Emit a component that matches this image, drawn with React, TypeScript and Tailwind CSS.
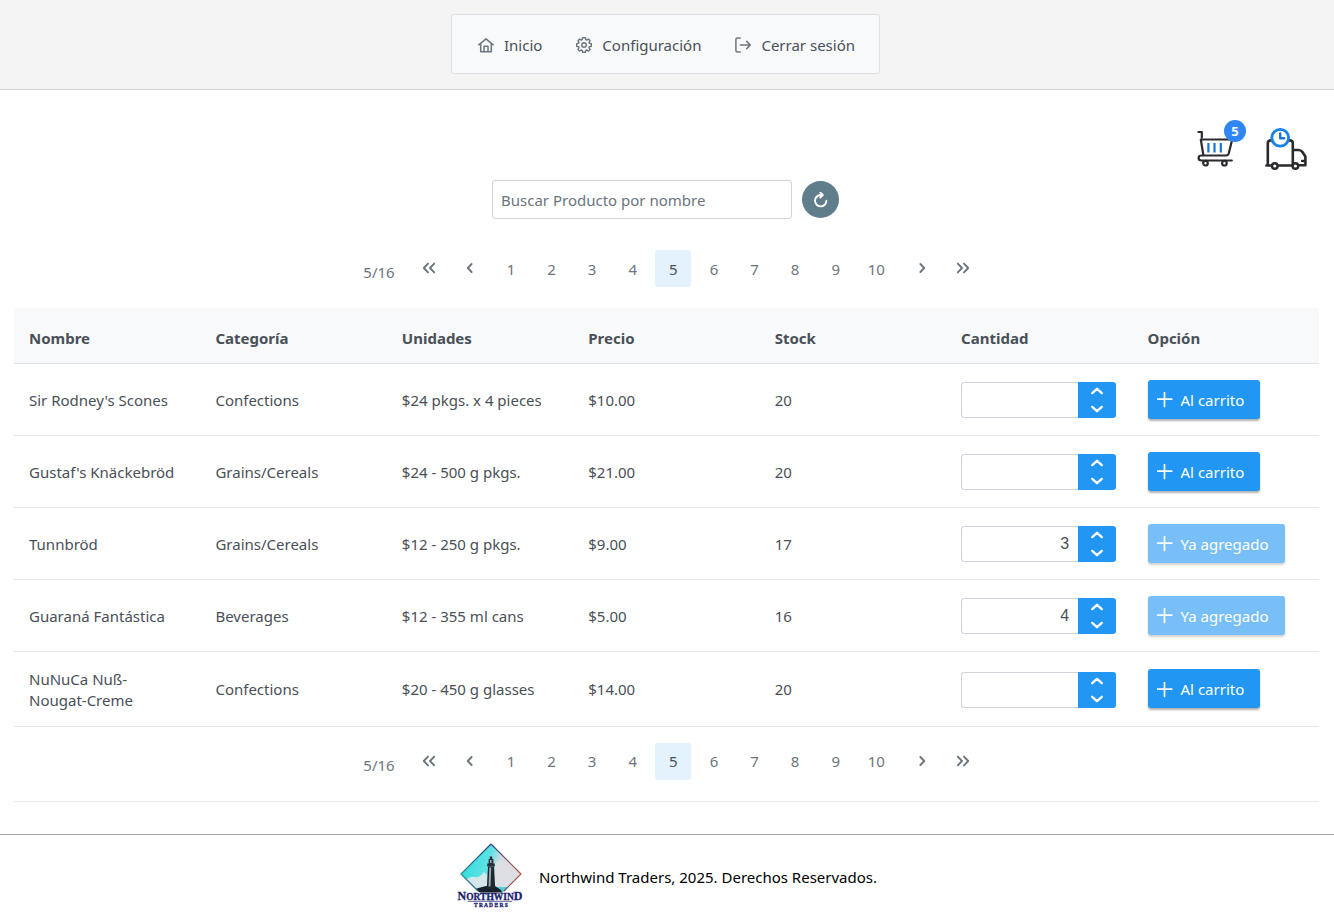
import { useState } from "react";
import type { ReactNode } from "react";

type Product = {
  name: string;
  category: string;
  units: string;
  price: string;
  stock: number;
  quantity: string;
  added: boolean;
};

const products: Product[] = [
  { name: "Sir Rodney's Scones", category: "Confections", units: "$24 pkgs. x 4 pieces", price: "$10.00", stock: 20, quantity: "", added: false },
  { name: "Gustaf's Knäckebröd", category: "Grains/Cereals", units: "$24 - 500 g pkgs.", price: "$21.00", stock: 20, quantity: "", added: false },
  { name: "Tunnbröd", category: "Grains/Cereals", units: "$12 - 250 g pkgs.", price: "$9.00", stock: 17, quantity: "3", added: true },
  { name: "Guaraná Fantástica", category: "Beverages", units: "$12 - 355 ml cans", price: "$5.00", stock: 16, quantity: "4", added: true },
  { name: "NuNuCa Nuß-Nougat-Creme", category: "Confections", units: "$20 - 450 g glasses", price: "$14.00", stock: 20, quantity: "", added: false },
];

const columns = ["Nombre", "Categoría", "Unidades", "Precio", "Stock", "Cantidad", "Opción"];
const pages = [1, 2, 3, 4, 5, 6, 7, 8, 9, 10];

function Glyph({ d, className = "size-4", width = 1.3 }: { d: string; className?: string; width?: number }) {
  return (
    <svg viewBox="0 0 16 16" className={className} fill="none" stroke="currentColor" strokeWidth={width} strokeLinecap="round" strokeLinejoin="round" aria-hidden="true">
      <path d={d} />
    </svg>
  );
}

const HOME = "M.8 7.8 8 1.8l7.2 6M2.7 6.4v8.3h10.6V6.4M6 14.5V9.2h4v5.3";
const EXIT = "M5.2 1H2.4Q.9 1 .9 2.5v11Q.9 15 2.4 15h2.8M5.4 8h9.8M11.7 4.4 15.3 8l-3.6 3.6";
const LEFT = "M9.6 4 5.8 8l3.8 4";
const RIGHT = "M6.4 4 10.2 8l-3.8 4";
const DOUBLE_LEFT = "M7 3.6 2.8 8 7 12.4M13.2 3.6 9 8l4.2 4.4";
const DOUBLE_RIGHT = "M2.8 3.6 7 8l-4.2 4.4M9 3.6 13.2 8 9 12.4";

function GearIcon() {
  return (
    <svg viewBox="0 0 16 16" className="size-4" fill="none" stroke="currentColor" strokeWidth="1.4" strokeLinejoin="round" aria-hidden="true">
      <path d="M6.6.8h2.8l.4 1.9 1 .4 1.7-1.1 1.6 1.7-1.1 1.6.4 1 1.9.4v2.7l-1.9.4-.4 1 1.1 1.7-1.7 1.6-1.6-1.1-1 .4-.4 1.9H6.6l-.4-1.9-1-.4L3.6 14 2 12.4l1-1.6-.4-1-1.9-.4V6.7l1.9-.4.4-1L2 3.7 3.6 2l1.6 1.1 1-.4z" />
      <circle cx="8" cy="8" r="2.2" />
    </svg>
  );
}

function CartIcon() {
  return (
    <svg viewBox="0 0 37 37" className="size-[37px]" fill="none" stroke="#2b2b2f" strokeWidth="2.2" strokeLinecap="round" strokeLinejoin="round" aria-hidden="true">
      <path d="M1.4 2h3.4v5.5M3.8 9.5h31.4l-3.4 13.8q-.6 2.2-2.6 2.2H4.4q-2.8 0-2.8 2.5t2.8 2.5h30.4M3.8 9.5 6.4 25.2" />
      <circle cx="8.5" cy="33.2" r="2.3" fill="#fff" />
      <circle cx="27.4" cy="33.2" r="2.3" fill="#fff" />
      <path d="M11.4 13v9.4M17.5 13v9.4M23.8 13v9.4" stroke="#1a73d9" strokeLinecap="butt" />
    </svg>
  );
}

function DeliveryIcon() {
  return (
    <svg viewBox="0 0 42 42" className="size-[42px]" fill="none" stroke="#2b2b2f" strokeWidth="2.6" strokeLinecap="round" strokeLinejoin="round" aria-hidden="true">
      <path d="M2.8 37.5V15q0-2.6 3.6-2.6M24.4 12.4q3.4 0 3.4 2.6v22.5M27.8 22h5.6q2.6 0 4 2l3 4.4v8.9h-6M1.4 37.5h5.2M12.8 37.5h14.5M37.2 33h3" />
      <circle cx="9.8" cy="38" r="2.8" fill="#fff" strokeWidth="2.4" />
      <circle cx="30.4" cy="38" r="2.8" fill="#fff" strokeWidth="2.4" />
      <circle cx="15.2" cy="9.8" r="8.4" fill="#fff" stroke="#1683e8" strokeWidth="2.8" />
      <path d="M15.2 5.4v4.8h4" stroke="#1a73d9" strokeWidth="2.4" />
    </svg>
  );
}

function NorthwindLogo() {
  return (
    <svg viewBox="0 0 66 66" className="size-[66px]" role="img" aria-label="Northwind Traders">
      <defs>
        <linearGradient id="sky" x1="0" x2="1" y1="0.3" y2="0.6">
          <stop offset="0.1" stopColor="#34dede" />
          <stop offset="0.44" stopColor="#5fe2e4" />
          <stop offset="0.58" stopColor="#cfdbe1" />
          <stop offset="1" stopColor="#e6e6ea" />
        </linearGradient>
        <linearGradient id="edge" x1="0" x2="1" y1="0" y2="0">
          <stop offset="0" stopColor="#2b8c8c" />
          <stop offset="0.5" stopColor="#2a3f8c" />
          <stop offset="1" stopColor="#b4563c" />
        </linearGradient>
        <clipPath id="diamond">
          <path d="M34 1 64 31 34 61 4 31z" />
        </clipPath>
      </defs>
      <g clipPath="url(#diamond)">
        <path d="M0 0h66v66H0z" fill="url(#sky)" />
        <path d="M8 38q5-5 10-4t9-5l3 3v14H14z" fill="#d3e6ea" />
        <path d="m38 20 9-4 8 6 10 8v12L50 45l-12-3z" fill="#dcdee4" />
        <path d="M38 44h16v6H38z" fill="#4fcfd3" />
        <path d="M18 46q7-2 11-3h9l6 4 2 4H18z" fill="#16212b" />
      </g>
      <path d="M34 1 64 31 47 48M21 48 4 31 34 1" fill="none" stroke="url(#edge)" strokeWidth="1.2" />
      <path d="M31 23.500 29.800 46h8.400L37 23.500z" fill="#1d2730" />
      <path d="m32.300 24.500-.8 19h2l.8-19z" fill="#9aa5ab" />
      <path d="M30.200 20.500h7.600v3h-7.600zM31.600 16h4.800v5h-4.800zM32.800 13.500h2.400V16h-2.400z" fill="#26323b" />
      <path d="M33.200 17h1.200v3h-1.200z" fill="#c5cfd4" />
      <path d="M2 49h62v7H2z" fill="#fff" fillOpacity="0.5" />
      <g fill="#1d1d70" stroke="#1d1d70" strokeWidth="0.3" fontFamily="Liberation Serif, serif" fontWeight="700" textAnchor="middle">
        <text x="33" y="57" fontSize="9.5">
          <tspan fontSize="12">N</tspan>ORTHWIN<tspan fontSize="12">D</tspan>
        </text>
        <text x="34" y="64" fontSize="5.5">T R A D E R S</text>
      </g>
      <path d="M11 58.300h44" stroke="#1d1d70" strokeWidth="0.7" />
    </svg>
  );
}

function NavLink({ icon, children }: { icon: ReactNode; children: ReactNode }) {
  return (
    <a href="#" className="flex items-center gap-[10px]">
      <span className="text-[#6c757d]">{icon}</span>
      {children}
    </a>
  );
}

function ArrowButton({ label, d }: { label: string; d: string }) {
  return (
    <button type="button" aria-label={label} className="flex h-9 w-[41px] items-center justify-center">
      <Glyph d={d} width={1.9} />
    </button>
  );
}

function Paginator({ current, onChange }: { current: number; onChange: (page: number) => void }) {
  return (
    <nav aria-label="Paginación" className="flex items-start justify-center text-[15px] text-[#6c757d]">
      <span className="mr-[14px] ml-[14px] pt-3 leading-5">{current}/16</span>
      <ArrowButton label="Primera página" d={DOUBLE_LEFT} />
      <ArrowButton label="Página anterior" d={LEFT} />
      <ol className="grid w-[406px] grid-cols-10 justify-items-center">
        {pages.map((page) => (
          <li key={page}>
            <button
              type="button"
              aria-current={page === current ? "page" : undefined}
              onClick={() => onChange(page)}
              className={page === current ? "h-[37px] w-9 rounded-[3px] bg-[#e3f2fd] pt-px text-[#495057]" : "h-[37px] w-9 pt-px"}
            >
              {page}
            </button>
          </li>
        ))}
      </ol>
      <span className="ml-[5px] flex">
        <ArrowButton label="Página siguiente" d={RIGHT} />
        <ArrowButton label="Última página" d={DOUBLE_RIGHT} />
      </span>
    </nav>
  );
}

function QuantityInput({ product }: { product: Product }) {
  const [value, setValue] = useState(product.quantity);
  const step = (amount: number) => setValue(String(Math.max(0, Number(value) + amount)));
  return (
    <div className="flex h-9 w-[155px]">
      <input
        aria-label={`Cantidad de ${product.name}`}
        value={value}
        onChange={(event) => setValue(event.target.value)}
        className="w-full min-w-0 rounded-l-[3px] border border-r-0 border-[#ced4da] bg-white px-[9px] text-right font-['Liberation_Sans',sans-serif] text-base text-[#495057] outline-none"
      />
      <div className="flex w-[38px] shrink-0 flex-col rounded-r-[3px] bg-[#2196f3] text-white">
        <button type="button" aria-label="Aumentar" onClick={() => step(1)} className="flex flex-1 items-center justify-center">
          <Glyph d="M3.2 10.2 8 5.8l4.8 4.4" width={2.3} />
        </button>
        <button type="button" aria-label="Disminuir" onClick={() => step(-1)} className="flex flex-1 items-center justify-center">
          <Glyph d="M3.2 5.8 8 10.2l4.8-4.4" width={2.3} />
        </button>
      </div>
    </div>
  );
}

function CartButton({ added }: { added: boolean }) {
  return (
    <button
      type="button"
      disabled={added}
      className={
        added
          ? "flex h-[39px] items-center gap-2 rounded-[3px] bg-[#2196f3] pt-[2px] pr-4 pl-[9px] whitespace-nowrap text-white opacity-60 shadow-[0_2px_2px_rgba(0,0,0,0.3)]"
          : "flex h-[39px] items-center gap-2 rounded-[3px] bg-[#2196f3] pt-[2px] pr-4 pl-[9px] whitespace-nowrap text-white shadow-[0_2px_2px_rgba(0,0,0,0.3)]"
      }
    >
      <Glyph d="M7.500 0v14.400M.3 7.200h14.400" width={1.7} />
      {added ? "Ya agregado" : "Al carrito"}
    </button>
  );
}

export default function App() {
  const [page, setPage] = useState(5);
  return (
    <div className="bg-white font-['Noto_Sans',sans-serif] text-[15px] leading-[21px] text-[#495057]">
      <header className="flex justify-center border-b border-[#d2d2d2] bg-[#f4f4f4] pt-[14px] pr-[3px] pb-[15px]">
        <nav aria-label="Principal" className="flex h-[60px] items-center gap-[34px] rounded-[3px] border border-[#dee2e6] bg-[#f8f9fa] pt-[2px] pr-6 pl-[26px]">
          <NavLink icon={<Glyph d={HOME} width={1.5} />}>Inicio</NavLink>
          <NavLink icon={<GearIcon />}>Configuración</NavLink>
          <NavLink icon={<Glyph d={EXIT} width={1.5} />}>Cerrar sesión</NavLink>
        </nav>
      </header>

      <main className="pr-[15px] pl-[14px]">
        <div className="flex h-[90px] items-end justify-end gap-[31px] pr-3 pb-[10px]">
          <button type="button" aria-label="Ver carrito" className="relative mb-[3px]">
            <CartIcon />
            <span className="absolute -top-[10px] left-[27px] flex size-[22px] items-center justify-center rounded-full bg-[#2f86f6] text-[13px] font-bold text-white">5</span>
          </button>
          <button type="button" aria-label="Ver pedidos">
            <DeliveryIcon />
          </button>
        </div>

        <form className="flex items-center justify-center gap-[10px] pr-[2px] pb-[31px]" onSubmit={(event) => event.preventDefault()}>
          <input
            type="text"
            aria-label="Buscar producto"
            placeholder="Buscar Producto por nombre"
            className="h-[39px] w-[300px] rounded-[3px] border border-[#ced4da] bg-white px-2 outline-none placeholder:text-[#6c757d]"
          />
          <button type="reset" aria-label="Restablecer" className="flex size-[37px] items-center justify-center rounded-full bg-[#607d8b] text-white">
            <Glyph d="M9.2 3H7.600A5.700 5.700 0 1 0 13.400 8.700M7.200.4 9.800 3 7.200 5.600" width={1.9} />
          </button>
        </form>

        <Paginator current={page} onChange={setPage} />

        <table className="mt-[21px] w-full table-fixed border-collapse text-left">
          <thead>
            <tr className="h-[55px] border-b border-[#dee2e6] bg-[#f8f9fa]">
              {columns.map((column) => (
                <th key={column} scope="col" className="px-[15px] pt-[7px] font-bold">
                  {column}
                </th>
              ))}
            </tr>
          </thead>
          <tbody>
            {products.map((product) => (
              <tr key={product.name} className="border-b border-[#e3e7ea]">
                <td className="pt-[17px] pr-6 pb-[15px] pl-[15px]">{product.name}</td>
                <td className="px-[15px] pt-[17px] pb-[15px]">{product.category}</td>
                <td className="px-[15px] pt-[17px] pb-[15px]">{product.units}</td>
                <td className="px-[15px] pt-[17px] pb-[15px]">{product.price}</td>
                <td className="px-[15px] pt-[17px] pb-[15px]">{product.stock}</td>
                <td className="px-[15px] pt-[17px] pb-[15px]">
                  <QuantityInput product={product} />
                </td>
                <td className="px-[15px] py-4">
                  <CartButton added={product.added} />
                </td>
              </tr>
            ))}
          </tbody>
        </table>

        <div className="border-b border-[#e9ecef] pt-4 pb-[21px]">
          <Paginator current={page} onChange={setPage} />
        </div>
      </main>

      <footer className="mt-8 flex items-center justify-center gap-4 border-t border-[#a8a8a8] pt-2 text-black">
        <NorthwindLogo />
        <p className="pt-[3px]">Northwind Traders, 2025. Derechos Reservados.</p>
      </footer>
    </div>
  );
}
